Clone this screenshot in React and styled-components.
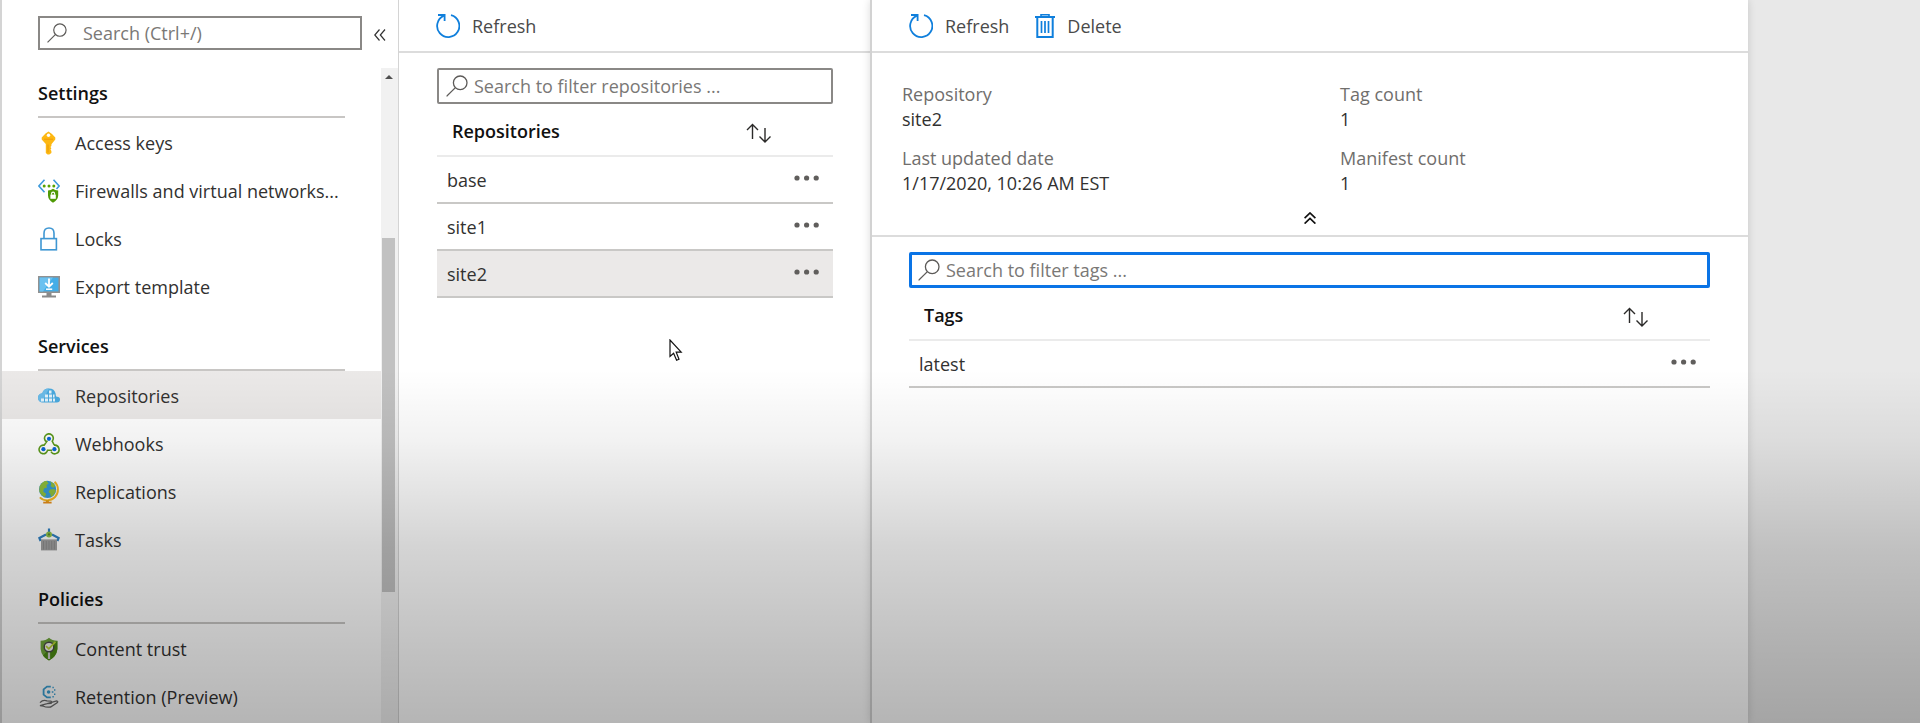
import React from 'react';
import styled, { createGlobalStyle, css } from 'styled-components';

const GlobalStyle = createGlobalStyle`
  *, *::before, *::after { box-sizing: border-box; }
  body {
    margin: 0;
    background: #e8e8e8;
    color: #323130;
    font-family: 'Open Sans', 'Noto Sans', sans-serif;
    font-size: 18px;
    line-height: 24px;
  }
  button, input { font: inherit; color: inherit; }
  h1, h2, dl, dd, ul { margin: 0; padding: 0; }
`;

const Shell = styled.div`
  position: relative;
  display: grid;
  grid-template-columns: 399px 471px minmax(0, 46fr) minmax(0, 9fr);
  min-height: 100vh;
`;

const Shade = styled.div`
  position: absolute;
  inset: 51% 0 0;
  z-index: 3;
  pointer-events: none;
  background: linear-gradient(
    rgba(0, 0, 0, 0),
    rgba(0, 0, 0, 0.05) 20%,
    rgba(0, 0, 0, 0.17) 50%,
    rgba(0, 0, 0, 0.24) 78%,
    rgba(0, 0, 0, 0.29)
  );
`;

const Pointer = styled.svg`
  position: absolute;
  left: 270px;
  top: 339px;
`;

const IconButton = styled.button`
  display: inline-flex;
  align-items: center;
  justify-content: center;
  padding: 0;
  border: 0;
  background: none;
  vertical-align: middle;
  cursor: pointer;
`;

/* Side menu */

const Sidebar = styled.aside`
  display: flex;
  flex-direction: column;
  background: #fff;
  border-left: 2px solid #d4d4d4;
  border-right: 1px solid #d4d4d4;
`;

const SidebarTop = styled.div`
  display: flex;
  align-items: center;
  gap: 12px;
  padding: 16px 12px 18px 36px;
`;

const SidebarBody = styled.div`
  flex: 1;
  display: flex;
`;

const Menu = styled.nav`
  flex: 1;
  min-width: 0;
`;

const MenuHeading = styled.h2`
  display: flex;
  align-items: flex-end;
  height: ${(p) => (p.$first ? 50 : 61)}px;
  margin: 0 36px;
  padding-bottom: 11px;
  border-bottom: 2px solid #c8c6c4;
  color: #111;
  font-size: 18px;
  font-weight: 600;
`;

const MenuList = styled.ul`
  list-style: none;
`;

const MenuLink = styled.a`
  display: flex;
  align-items: center;
  gap: 15px;
  height: 48px;
  padding: 2px 0 0 36px;
  color: inherit;
  text-decoration: none;
  white-space: nowrap;
  background: ${(p) => (p.$active ? '#ebe9e8' : 'transparent')};

  svg { flex: none; }
`;

const Scrollbar = styled.div`
  width: 17px;
  padding-right: 2px;
  display: grid;
  grid-template-rows: 17px 153fr 354fr 131fr;
  justify-items: center;
  align-items: center;
  background: #f1f1f1;
`;

const ScrollThumb = styled.div`
  grid-row: 3;
  width: 13px;
  height: 100%;
  background: #c1c1c1;
`;

/* Search boxes */

const SearchField = styled.label`
  flex: 1;
  display: flex;
  align-items: center;
  height: ${(p) => (p.$size === 'small' ? 34 : 36)}px;
  gap: ${(p) => (p.$size === 'small' ? 16 : 6)}px;
  padding-left: 7px;
  border: 2px solid #8a8886;
  border-radius: ${(p) => (p.$size === 'small' ? 0 : 2)}px;
  background: #fff;
  ${(p) => p.$focused && css`
    padding-left: 6px;
    border: 3px solid #0a74e6;
  `}

  svg { flex: none; }
`;

const SearchInput = styled.input`
  flex: 1;
  min-width: 0;
  padding: 0;
  border: 0;
  outline: 0;
  background: transparent;
  &::placeholder { color: #7a7876; opacity: 1; }
`;

/* Content panels */

const Panel = styled.section`
  position: relative;
  background: #fff;
`;

const DetailPanel = styled(Panel)`
  border-left: 2px solid #d2d2d2;
  box-shadow: 0 0 8px rgba(0, 0, 0, 0.14);
`;

const Toolbar = styled.div`
  display: flex;
  align-items: center;
  gap: 26px;
  height: 53px;
  padding-left: 37px;
  border-bottom: 2px solid #dcdcdc;
`;

const Command = styled(IconButton)`
  gap: 12px;
  color: #4a4a4a;
`;

const PanelBody = styled.div`
  padding: ${(p) => (p.$wide ? '15px 38px 0 37px' : '15px 37px 0 38px')};
`;

const List = styled.table`
  width: 100%;
  border-collapse: separate;
  border-spacing: 0;
`;

const HeadCell = styled.th`
  height: 53px;
  padding: 2px 0 0 15px;
  border-bottom: 2px solid #ebebeb;
  color: #111;
  text-align: left;
  font-weight: 600;
`;

const HeadSort = styled(HeadCell)`
  padding: 2px 0 0;
  width: 40px;
`;

const HeadMenu = styled(HeadCell)`
  padding: 0;
  width: 47px;
`;

const ListRow = styled.tr`
  background: ${(p) => (p.$selected ? '#ebe9e8' : 'transparent')};
`;

const Cell = styled.td`
  height: 47px;
  padding: 0 0 0 10px;
  border-bottom: 2px solid #c9c8c6;
`;

const MenuCell = styled(Cell)`
  padding: 0 13px 4px 0;
  text-align: right;
  line-height: 0;
`;

const Essentials = styled.div`
  padding-top: 29px;
  border-bottom: 2px solid #dcdcdc;
`;

const Facts = styled.dl`
  display: grid;
  grid-template-columns: 1fr 1fr;
  row-gap: 14px;
`;

const Fact = styled.div`
  padding-left: 30px;
  line-height: 25px;
  dt { color: #706e6c; }
`;

const CollapseBar = styled.div`
  display: flex;
  justify-content: center;
  padding: 16px 0 11px;
`;

/* Icons */

const SearchIcon = ({ size = 22 }) => (
  <svg width={size} height={size} viewBox="0 0 22 22" fill="none" stroke="#5c5a58" strokeWidth="1.3" aria-hidden="true">
    <circle cx="14.2" cy="7.8" r="6.8" />
    <path d="M9.4 12.6 0.6 21.4" />
  </svg>
);

const RefreshIcon = () => (
  <svg width="24" height="26" viewBox="0 0 24 26" fill="none" stroke="#0f7fdc" strokeWidth="1.8" aria-hidden="true">
    <path d="M15 2.2A11.1 11.1 0 1 1 8 2.7" />
    <path d="M2 2H8.6V8" />
  </svg>
);

const TrashIcon = () => (
  <svg width="20" height="26" viewBox="0 0 20 26" fill="none" stroke="#0f7fdc" aria-hidden="true">
    <path d="M0 4H20" strokeWidth="2" />
    <path d="M6 4V1.7H14V4" strokeWidth="1.6" />
    <path d="M2.3 4V24H17.7V4" strokeWidth="2" />
    <path d="M6.5 8V20M10 8V20M13.5 8V20" strokeWidth="1.7" />
  </svg>
);

const SortIcon = () => (
  <svg width="26" height="20" viewBox="0 0 26 20" fill="none" stroke="#2b2a29" strokeWidth="1.4" aria-hidden="true">
    <path d="M6.5 16V1.5M1 7 6.5 1.5 12 7" />
    <path d="M19 5V19M13.5 13.5 19 19 24.5 13.5" />
  </svg>
);

const DotsIcon = () => (
  <svg width="26" height="6" viewBox="0 0 26 6" fill="#605e5c" aria-hidden="true">
    <circle cx="3" cy="3" r="2.6" />
    <circle cx="12.6" cy="3" r="2.6" />
    <circle cx="22.2" cy="3" r="2.6" />
  </svg>
);

const CollapseLeftIcon = () => (
  <svg width="12" height="16" viewBox="0 0 12 16" fill="none" stroke="#333" strokeWidth="1.2" aria-hidden="true">
    <path d="M5.5 4.5 0.8 10 5.5 15.5M11 4.5 6.3 10 11 15.5" />
  </svg>
);

const CollapseUpIcon = () => (
  <svg width="12" height="12" viewBox="0 0 12 12" fill="none" stroke="#111" strokeWidth="1.7" aria-hidden="true">
    <path d="M0.6 6.2 6 1 11.4 6.2M0.6 11.6 6 6.4 11.4 11.6" />
  </svg>
);

const MenuIcon = ({ children }) => (
  <svg width="22" height="24" viewBox="0 0 22 24" fill="none" aria-hidden="true">{children}</svg>
);

const KeyIcon = () => (
  <MenuIcon>
    <path d="M10.5 0.5 14 3 17.3 6.5 17.3 8.5 14 12.4 13.4 13.5V15L12.4 16 13.4 17.2 12.5 18.5 13.4 20V22L11.3 23.6H9.6L7.8 22V13L3.7 8.5V6.5L7.5 2.5Z" fill="#fdb813" />
    <path d="M10 13.5V21.5" stroke="#e89a0c" strokeWidth="1" />
    <path d="M6 8.3H15" stroke="#f5a30a" strokeWidth="1.4" />
    <circle cx="10.5" cy="4.2" r="1.7" fill="#fff" />
  </MenuIcon>
);

const FirewallIcon = () => (
  <MenuIcon>
    <path d="M6.5 0.8 0.9 7 6.5 13.2M15.5 0.8 21.1 7 18.5 10" stroke="#3f9bdc" strokeWidth="1.6" />
    <circle cx="6.2" cy="7" r="1.5" fill="#57a300" />
    <circle cx="11" cy="7" r="1.5" fill="#57a300" />
    <circle cx="15.8" cy="7" r="1.5" fill="#57a300" />
    <path d="M10 11.6Q13 11.6 15 9.8Q17 11.6 20.2 11.6V16.5Q20 21 15 23.7Q10.2 21 10 16.5Z" fill="#4f9a06" />
    <path d="M13.6 15.8V14.6Q13.6 13.1 15.1 13.1Q16.6 13.1 16.6 14.6V15.8" stroke="#fff" strokeWidth="1.1" />
    <rect x="12.4" y="15.6" width="5.4" height="4.2" fill="#fff" />
  </MenuIcon>
);

const LockIcon = () => (
  <MenuIcon>
    <path d="M6 11.5V6.2Q6 1 11 1Q16 1 16 6.2V11.5" stroke="#3f97d3" strokeWidth="1.6" />
    <rect x="3" y="11.6" width="15.4" height="11.2" stroke="#3f97d3" strokeWidth="1.6" fill="#fff" />
  </MenuIcon>
);

const ExportIcon = () => (
  <MenuIcon>
    <rect x="0" y="1" width="22" height="17" fill="#919191" />
    <rect x="1.6" y="2.6" width="18.8" height="13.8" fill="#43ade8" />
    <path d="M1.6 2.6H15L5 16.4H1.6Z" fill="#6cc1f0" />
    <path d="M11 3.5V11.2M7.2 8 11 11.7 14.8 8" stroke="#fff" strokeWidth="1.8" />
    <path d="M8 14.2H14.2" stroke="#fff" strokeWidth="1.5" />
    <path d="M8.5 18H13.5V20.5H18V22.6H4V20.5H8.5Z" fill="#8a8a8a" />
  </MenuIcon>
);

const RegistryIcon = () => (
  <MenuIcon>
    <path d="M4.5 18.5Q0 18 0 13.8Q0 9.8 4.3 9.2Q5.2 4.6 11 4.5Q16.6 4.6 17.6 9.6Q17.6 12 18.6 12.8Q22 12.6 22 15.6Q22 18.5 18.8 18.5Z" fill="#4aa9de" />
    <path d="M4.5 18.5Q0 18 0 13.8Q0 9.8 4.3 9.2Q5.2 4.6 11 4.5L4 18.5Z" fill="#6bbbe8" />
    <path d="M3 14.5H6V17.5H3ZM7 14.5H10V17.5H7ZM11 14.5H14V17.5H11ZM15 14.5H17V17.5H15ZM7 10.5H10V13.5H7ZM11 10.5H14V13.5H11ZM15 10.5H16.5V13.5H15ZM11 6.5H13.5V9.5H11Z" fill="#e4f2fa" />
  </MenuIcon>
);

const WebhookIcon = () => (
  <MenuIcon>
    <path d="M8.4 9.9A4.4 4.4 0 1 1 14.2 9.2L16.2 13M9.4 8.6 6.2 13.2A4.3 4.3 0 1 0 9.6 18.2H14.2M16 13.2A4.3 4.3 0 1 1 13 19.6" stroke="#5c9a1c" strokeWidth="1.6" />
    <circle cx="11" cy="6.8" r="2.1" fill="#0a66d8" />
    <circle cx="5.4" cy="17.2" r="2.1" fill="#0a66d8" />
    <circle cx="16.4" cy="17.2" r="2.1" fill="#0a66d8" />
  </MenuIcon>
);

const GlobeIcon = () => (
  <MenuIcon>
    <path d="M16.6 1.8A10.4 10.4 0 0 1 1.8 17.4" stroke="#f5b824" strokeWidth="1.9" />
    <circle cx="9.6" cy="9.3" r="8.6" fill="#359bd6" />
    <path d="M1.6 6.5Q4 1.5 8.5 0.8L10.6 3.5 8.4 5 9 7.6 6 8.6 5.2 11.5 8.3 14 6.6 17Q3 15.5 1.3 11.5Z" fill="#8fbf3c" />
    <path d="M12 1.2Q16 2.8 17.4 5.8L15.2 8 12.6 6 13.4 4ZM12 9.5 16 9 17.8 10.5Q17 14.6 13 17L12.2 13.5 10.6 12Z" fill="#8fbf3c" />
    <path d="M9.4 20V22" stroke="#e9a616" strokeWidth="3" />
    <path d="M5.2 22.6H13.6" stroke="#e48d1b" strokeWidth="1.8" />
  </MenuIcon>
);

const TaskIcon = () => (
  <MenuIcon>
    <path d="M11 0.6V5M8 6.5 1.4 10 2.6 13M14 6.5 20.6 10 19.4 13" stroke="#2f80c2" strokeWidth="2.2" />
    <circle cx="11" cy="6.4" r="3" fill="#8dbf4a" />
    <circle cx="11" cy="6.4" r="1.1" fill="#5a8c2c" />
    <path d="M3 11.4H19V22.4H3Z" fill="#a0a0a0" />
    <path d="M5.5 13V21.6M8.3 13V21.6M11 13V21.6M13.7 13V21.6M16.4 13V21.6" stroke="#8a8a8a" strokeWidth="0.9" />
  </MenuIcon>
);

const TrustIcon = () => (
  <MenuIcon>
    <path d="M2.6 3.8Q8 3.6 11 0.8Q14 3.6 19.4 3.8V12Q18.6 19.5 11 23.6Q3.4 19.5 2.6 12Z" fill="#6fa83a" />
    <path d="M19.4 3.8V12Q18.6 19.5 11 23.6Q7 21.4 5 18.4Z" fill="#4b8a14" />
    <circle cx="11" cy="10" r="4.8" fill="#f4f6ee" stroke="#4a4a4a" strokeWidth="1.4" />
    <path d="M11 15.5V22" stroke="#d0d0d0" strokeWidth="2.2" />
    <path d="M8 9.2 10.8 11.8 17.4 4.8" stroke="#b9d432" strokeWidth="1.8" />
  </MenuIcon>
);

const RetentionIcon = () => (
  <MenuIcon>
    <path d="M12.8 1.6H9L5.6 4.4V9.6L9 12.4H12.8" stroke="#3a9fd2" strokeWidth="1.8" />
    <circle cx="10.6" cy="7" r="1.8" fill="#3a9fd2" />
    <path d="M14.4 2.4H15.8M16 5H17.4M13.8 7H15.4M16 9.2H17.4M14.4 11.8H15.8" stroke="#3a9fd2" strokeWidth="1.5" />
    <path d="M2 17.6Q5 14.4 9 15.8L13 16.2Q14.4 17.2 13 18.4L9 18.7M13.6 17.4 18.6 15.8Q20.4 16.2 19.4 17.6L12.6 22Q8 22.6 5.6 21.2L2 20.6Z" stroke="#6b6b6b" strokeWidth="1.3" />
  </MenuIcon>
);

/* Data */

const sections = [
  {
    title: 'Settings',
    items: [
      ['Access keys', KeyIcon],
      ['Firewalls and virtual networks...', FirewallIcon],
      ['Locks', LockIcon],
      ['Export template', ExportIcon],
    ],
  },
  {
    title: 'Services',
    items: [
      ['Repositories', RegistryIcon],
      ['Webhooks', WebhookIcon],
      ['Replications', GlobeIcon],
      ['Tasks', TaskIcon],
    ],
  },
  {
    title: 'Policies',
    items: [
      ['Content trust', TrustIcon],
      ['Retention (Preview)', RetentionIcon],
    ],
  },
];

const facts = [
  ['Repository', 'site2'],
  ['Tag count', '1'],
  ['Last updated date', '1/17/2020, 10:26 AM EST'],
  ['Manifest count', '1'],
];

const SearchBox = ({ placeholder, size, focused }) => (
  <SearchField $size={size} $focused={focused}>
    <SearchIcon size={size === 'small' ? 20 : 22} />
    <SearchInput type="text" placeholder={placeholder} aria-label={placeholder} />
  </SearchField>
);

const ItemTable = ({ title, items, selected }) => (
  <List>
    <thead>
      <tr>
        <HeadCell scope="col">{title}</HeadCell>
        <HeadSort scope="col">
          <IconButton aria-label={`Sort ${title}`}><SortIcon /></IconButton>
        </HeadSort>
        <HeadMenu />
      </tr>
    </thead>
    <tbody>
      {items.map((name) => (
        <ListRow key={name} $selected={name === selected}>
          <Cell colSpan={2}>{name}</Cell>
          <MenuCell>
            <IconButton aria-label={`More actions for ${name}`}><DotsIcon /></IconButton>
          </MenuCell>
        </ListRow>
      ))}
    </tbody>
  </List>
);

export default function App() {
  return (
    <>
      <GlobalStyle />
      <Shell>
        <Sidebar>
          <SidebarTop>
            <SearchBox placeholder="Search (Ctrl+/)" size="small" />
            <IconButton aria-label="Collapse menu"><CollapseLeftIcon /></IconButton>
          </SidebarTop>
          <SidebarBody>
            <Menu>
              {sections.map(({ title, items }, i) => (
                <React.Fragment key={title}>
                  <MenuHeading $first={i === 0}>{title}</MenuHeading>
                  <MenuList>
                    {items.map(([label, Icon]) => (
                      <li key={label}>
                        <MenuLink href="#" $active={label === 'Repositories'}>
                          <Icon />
                          {label}
                        </MenuLink>
                      </li>
                    ))}
                  </MenuList>
                </React.Fragment>
              ))}
            </Menu>
            <Scrollbar aria-hidden="true">
              <svg width="8" height="4" viewBox="0 0 8 4"><path d="M0 4 4 0 8 4Z" fill="#505050" /></svg>
              <ScrollThumb />
            </Scrollbar>
          </SidebarBody>
        </Sidebar>

        <Panel>
          <Toolbar>
            <Command><RefreshIcon />Refresh</Command>
          </Toolbar>
          <PanelBody>
            <SearchBox placeholder="Search to filter repositories ..." />
            <ItemTable title="Repositories" items={['base', 'site1', 'site2']} selected="site2" />
          </PanelBody>
          <Pointer width="14" height="24" viewBox="0 0 14 24" aria-hidden="true">
            <path d="M1 1V17.5L4.6 14.2 7.6 21.2 10 20.2 7.2 13.2H12.2Z" fill="#fff" stroke="#111" strokeWidth="1.2" />
          </Pointer>
        </Panel>

        <DetailPanel>
          <Toolbar>
            <Command><RefreshIcon />Refresh</Command>
            <Command><TrashIcon />Delete</Command>
          </Toolbar>
          <Essentials>
            <Facts>
              {facts.map(([label, value]) => (
                <Fact key={label}>
                  <dt>{label}</dt>
                  <dd>{value}</dd>
                </Fact>
              ))}
            </Facts>
            <CollapseBar>
              <IconButton aria-label="Collapse details"><CollapseUpIcon /></IconButton>
            </CollapseBar>
          </Essentials>
          <PanelBody $wide>
            <SearchBox placeholder="Search to filter tags ..." focused />
            <ItemTable title="Tags" items={['latest']} />
          </PanelBody>
        </DetailPanel>
        <Shade />
      </Shell>
    </>
  );
}
